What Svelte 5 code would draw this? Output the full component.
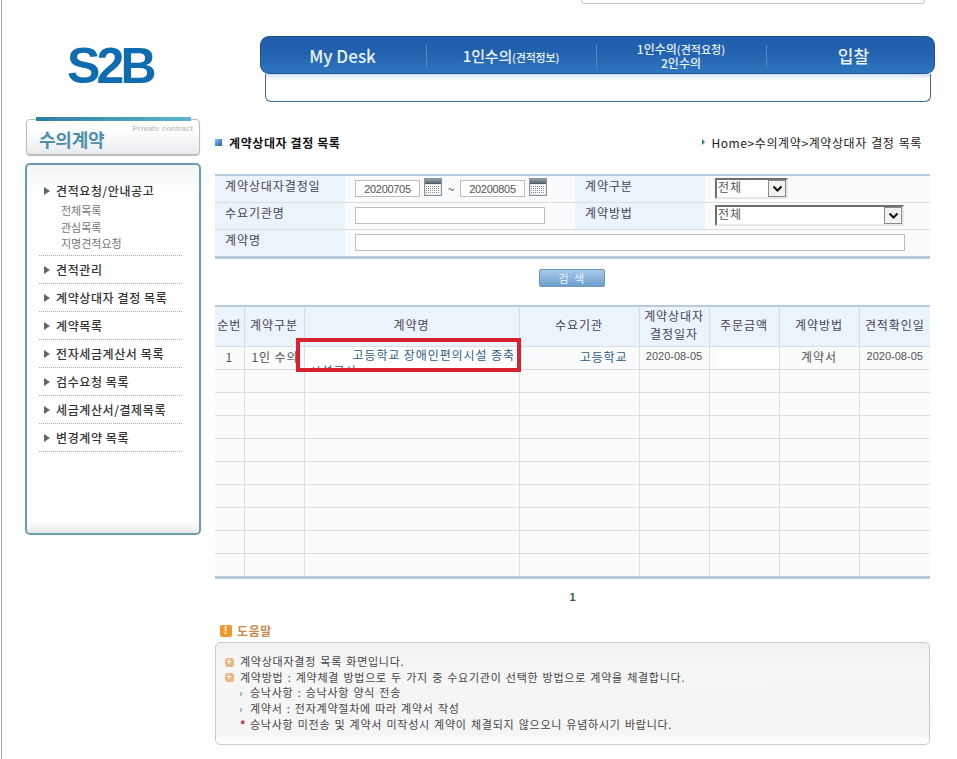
<script>
  const navItems = [
    { main: "My Desk", cls: "desk" },
    { main: "1인수의", small: "(견적정보)", cls: "solo" },
    { lines: true },
    { main: "입찰", cls: "bid" },
  ];

  const menu = [
    { label: "견적요청/안내공고", subs: ["전체목록", "관심목록", "지명견적요청"] },
    { label: "견적관리" },
    { label: "계약상대자 결정 목록" },
    { label: "계약목록" },
    { label: "전자세금계산서 목록" },
    { label: "검수요청 목록" },
    { label: "세금계산서/결제목록" },
    { label: "변경계약 목록" },
  ];

  const columns = ["순번", "계약구분", "계약명", "수요기관", "계약상대자<br>결정일자", "주문금액", "계약방법", "견적확인일"];
  const emptyRows = Array(9).fill(0);
</script>

{#snippet calendar()}
  <svg class="cal" width="18" height="18" viewBox="0 0 18 18" aria-hidden="true">
    <defs>
      <linearGradient id="calTop" x1="0" y1="0" x2="0" y2="1">
        <stop offset="0" stop-color="#9aa3ad" />
        <stop offset="1" stop-color="#4f5a66" />
      </linearGradient>
      <pattern id="calDots" width="2" height="2" patternUnits="userSpaceOnUse">
        <rect width="2" height="2" fill="#fff" />
        <rect width="1" height="1" fill="#7d8791" />
      </pattern>
    </defs>
    <rect x="0.5" y="0.5" width="17" height="17" fill="#e6e8ea" stroke="#8a929a" />
    <rect x="1" y="1" width="16" height="5" fill="url(#calTop)" />
    <rect x="2" y="7" width="14" height="9" fill="url(#calDots)" />
  </svg>
{/snippet}

{#snippet selectBox(wide)}
  <div class="select" class:wide>
    <span class="select-value">전체</span>
    <span class="select-btn">
      <svg width="11" height="8" viewBox="0 0 11 8" aria-hidden="true">
        <path d="M1.5 1.5 L5.5 5.5 L9.5 1.5" fill="none" stroke="#111" stroke-width="2" />
      </svg>
    </span>
  </div>
{/snippet}

<div class="page">
  <div class="top-stub"></div>

  <header class="header">
    <div class="logo">S2B</div>
    <div class="nav-wrap">
      <nav class="nav">
        {#each navItems as item, i}
          <div class="nav-item {item.cls ?? ''}" class:first={i === 0}>
            {#if item.lines}
              <span class="nav-two">1인수의<small>(견적요청)</small><br />2인수의</span>
            {:else}
              <span>{item.main}{#if item.small}<small>{item.small}</small>{/if}</span>
            {/if}
          </div>
        {/each}
      </nav>
      <div class="subnav"></div>
    </div>
  </header>

  <div class="content">
    <aside class="side">
      <div class="side-title">
        <span class="side-bar"></span>
        <strong>수의계약</strong>
        <em>Private contract</em>
      </div>
      <ul class="menu">
        {#each menu as item}
          <li>
            <div class="menu-label">{item.label}</div>
            {#if item.subs}
              <ul class="submenu">
                {#each item.subs as sub}
                  <li>{sub}</li>
                {/each}
              </ul>
            {/if}
          </li>
        {/each}
      </ul>
    </aside>

    <main class="main">
      <div class="head">
        <h2><span class="square"></span>계약상대자 결정 목록</h2>
        <div class="crumb"><span class="crumb-dot"></span>Home&gt;수의계약&gt;계약상대자 결정 목록</div>
      </div>

      <table class="search">
        <colgroup>
          <col style="width:130px" /><col style="width:230px" /><col style="width:130px" /><col />
        </colgroup>
        <tbody>
          <tr>
            <th>계약상대자결정일</th>
            <td>
              <div class="dates">
                <input class="input date" value="20200705" />
                {@render calendar()}
                <span class="tilde">~</span>
                <input class="input date" value="20200805" />
                {@render calendar()}
              </div>
            </td>
            <th>계약구분</th>
            <td>{@render selectBox(false)}</td>
          </tr>
          <tr>
            <th>수요기관명</th>
            <td><input class="input org" /></td>
            <th>계약방법</th>
            <td>{@render selectBox(true)}</td>
          </tr>
          <tr>
            <th>계약명</th>
            <td colspan="3"><input class="input name" /></td>
          </tr>
        </tbody>
      </table>

      <div class="search-action"><button class="search-btn">검 색</button></div>

      <div class="grid-wrap">
        <table class="grid">
          <colgroup>
            <col style="width:29px" /><col style="width:60px" /><col style="width:215px" /><col style="width:120px" />
            <col style="width:70px" /><col style="width:70px" /><col style="width:80px" /><col />
          </colgroup>
          <thead>
            <tr>
              {#each columns as col}
                <th>{@html col}</th>
              {/each}
            </tr>
          </thead>
          <tbody>
            <tr class="data">
              <td>1</td>
              <td class="kind">1인 수의</td>
              <td class="contract">
                <div class="clip">고등학교 장애인편의시설 종축 시설공사</div>
              </td>
              <td class="org-cell"><span class="blue">고등학교</span></td>
              <td class="num">2020-08-05</td>
              <td class="amount"><span class="mask"></span></td>
              <td>계약서</td>
              <td class="num">2020-08-05</td>
            </tr>
            {#each emptyRows as _}
              <tr>
                <td></td><td></td><td></td><td></td><td></td><td></td><td></td><td></td>
              </tr>
            {/each}
          </tbody>
        </table>
        <div class="highlight"></div>
      </div>

      <div class="pager">1</div>

      <h3 class="help-title"><span class="help-icon">!</span>도움말</h3>
      <div class="help">
        <p><span class="plus">+</span>계약상대자결정 목록 화면입니다.</p>
        <p><span class="plus">+</span>계약방법 : 계약체결 방법으로 두 가지 중 수요기관이 선택한 방법으로 계약을 체결합니다.</p>
        <p class="sub"><span class="tri"></span>승낙사항 : 승낙사항 양식 전송</p>
        <p class="sub"><span class="tri"></span>계약서 : 전자계약절차에 따라 계약서 작성</p>
        <p class="sub"><span class="star">*</span>승낙사항 미전송 및 계약서 미작성시 계약이 체결되지 않으오니 유념하시기 바랍니다.</p>
      </div>
    </main>
  </div>
</div>

<style>
  :global(body) {
    margin: 0;
    background: #fff;
  }

  .page {
    position: relative;
    width: 955px;
    height: 759px;
    margin-left: 1px;
    border-left: 1px solid #aaa;
    overflow: hidden;
    font-family: "Noto Sans CJK KR", "Liberation Sans", sans-serif;
    font-size: 12px;
    color: #444;
  }

  .top-stub {
    width: 342px;
    height: 3px;
    margin-left: 579px;
    border: 1px solid #c4c6cc;
    border-top: none;
    border-radius: 0 0 5px 5px;
  }

  .header {
    display: flex;
    margin-top: 32px;
  }

  .logo {
    width: 258px;
    box-sizing: border-box;
    padding: 0 0 0 65px;
    height: 66px;
    font-family: "Liberation Sans", sans-serif;
    font-size: 50px;
    font-weight: 700;
    line-height: 60px;
    letter-spacing: -3.8px;
    color: #0f6cb0;
  }

  .nav-wrap {
    width: 675px;
  }

  .nav {
    display: grid;
    grid-template-columns: 165px 170px 170px 1fr;
    height: 36px;
    border: 1px solid #1c5288;
    border-radius: 9px;
    background: linear-gradient(#1f5fae, #2161ae 40%, #2f76bf);
  }

  .nav-item {
    position: relative;
    display: flex;
    align-items: center;
    justify-content: center;
    font-size: 16px;
    font-weight: 500;
    color: #eaf2fb;
  }

  .nav-item:not(.first)::before {
    content: "";
    position: absolute;
    left: 0;
    top: 8px;
    bottom: 5px;
    width: 1px;
    background: #4f8ac6;
  }

  .nav-item.desk {
    font-size: 17px;
    padding-right: 2px;
  }

  .nav-item.solo {
    font-size: 15px;
    letter-spacing: -0.2px;
  }

  .nav-item.bid {
    font-size: 17px;
    padding-left: 7px;
  }

  .nav-item small {
    font-size: 11px;
    font-weight: 500;
  }

  .nav-two {
    font-size: 12px;
    line-height: 13px;
    text-align: center;
  }

  .nav-two small {
    font-size: 11px;
  }

  .subnav {
    box-sizing: border-box;
    width: 666px;
    height: 28px;
    margin-left: 5px;
    border: 1px solid #3a6d90;
    border-top: none;
    border-radius: 0 0 6px 6px;
    background: linear-gradient(#cfe0f6, #fff 6px);
  }

  .content {
    display: flex;
    margin-top: 15px;
  }

  .side {
    width: 176px;
    margin-left: 23px;
    margin-right: 14px;
  }

  .side-title {
    position: relative;
    box-sizing: border-box;
    height: 36px;
    margin: 2px 0 8px 1px;
    width: 174px;
    padding-left: 12px;
    border: 1px solid #b9bcc2;
    border-radius: 4px;
    background: linear-gradient(#fff 30%, #e8ebee);
    box-shadow: 0 1px 1px #bbb;
  }

  .side-bar {
    position: absolute;
    left: 9px;
    right: 8px;
    top: -3px;
    height: 4px;
    background: linear-gradient(90deg, #2b7f9f, #5bb8d0);
  }

  .side-title strong {
    display: block;
    padding-top: 6px;
    font-size: 18px;
    line-height: 26px;
    letter-spacing: -0.2px;
    color: #4d8fae;
  }

  .side-title em {
    position: absolute;
    right: 6px;
    top: 4px;
    font-family: "Liberation Sans", sans-serif;
    font-size: 8px;
    font-style: normal;
    font-weight: 700;
    color: #c8c8c8;
  }

  .menu {
    box-sizing: border-box;
    height: 372px;
    margin: 0;
    padding: 12px 17px 0 12px;
    list-style: none;
    border: 2px solid #6f9aae;
    border-radius: 5px;
    background: linear-gradient(#f2f5f7, #fff 30px, #fff 356px, #e8e8e8);
  }

  .menu > li {
    border-bottom: 1px dotted #aaa;
  }

  .menu-label {
    position: relative;
    height: 27px;
    padding-left: 17px;
    line-height: 27px;
    font-weight: 500;
    letter-spacing: 0.6px;
    color: #333;
  }

  .menu-label::before {
    content: "";
    position: absolute;
    left: 5px;
    top: 10px;
    border-left: 6px solid #5a6a6a;
    border-top: 4px solid transparent;
    border-bottom: 4px solid transparent;
  }

  .submenu {
    margin: -2px 0 3px;
    padding: 0 0 0 22px;
    list-style: none;
    font-size: 11px;
    line-height: 16.5px;
    color: #777;
  }

  .main {
    width: 715px;
  }

  .head {
    display: flex;
    align-items: center;
    justify-content: space-between;
    height: 50px;
    margin-bottom: 7px;
  }

  h2 {
    display: flex;
    align-items: center;
    margin: 0;
    font-size: 12px;
    font-weight: 700;
    letter-spacing: 0.6px;
    color: #111;
  }

  .square {
    width: 7px;
    height: 7px;
    margin-right: 7px;
    background: linear-gradient(135deg, #8cc0ee, #1e5fae);
  }

  .crumb {
    display: flex;
    align-items: center;
    padding-right: 8px;
    letter-spacing: 0.6px;
    word-spacing: 1px;
    color: #222;
  }

  .crumb-dot {
    width: 0;
    height: 0;
    margin-right: 6px;
    border-left: 3px solid #2a7f8f;
    border-top: 3px solid transparent;
    border-bottom: 3px solid transparent;
  }

  table {
    width: 715px;
    border-collapse: collapse;
    table-layout: fixed;
  }

  .search {
    border-top: 2px solid #b7cbdb;
    border-bottom: 3px solid #b7cbdb;
  }

  .search tr {
    height: 27px;
    border-bottom: 1px solid #ddd;
  }

  .search tr:last-child {
    height: 28px;
    border-bottom: none;
  }

  .search th {
    padding: 0 0 6px 10px;
    text-align: left;
    font-weight: 400;
    letter-spacing: 0.9px;
    color: #445;
    background: #ebf3fb;
  }

  .search td {
    padding: 0 0 0 10px;
    background: #fafbfd;
  }

  .input {
    display: block;
    box-sizing: border-box;
    height: 17px;
    padding: 0 3px;
    border: 1px solid #bdbdbd;
    border-radius: 0;
    background: #fff;
    font-family: "Liberation Sans", sans-serif;
    font-size: 11px;
    letter-spacing: -0.3px;
    color: #555;
    outline: none;
  }

  .date {
    width: 65px;
    text-align: center;
  }

  .org {
    width: 190px;
  }

  .name {
    width: 550px;
  }

  .dates {
    display: flex;
    align-items: center;
  }

  .cal {
    margin: -3px 0 0 4px;
  }

  .tilde {
    width: 18px;
    text-align: center;
  }

  .select {
    display: flex;
    justify-content: space-between;
    box-sizing: border-box;
    width: 73px;
    height: 21px;
    border: 2px solid;
    border-color: #6f6f6f #e6e6e6 #e6e6e6 #6f6f6f;
    background: #fff;
  }

  .select.wide {
    width: 189px;
  }

  .select-value {
    padding-left: 1px;
    line-height: 13px;
    letter-spacing: 0.9px;
    color: #555;
  }

  .select-btn {
    display: flex;
    align-items: center;
    justify-content: center;
    width: 18px;
    box-sizing: border-box;
    border: 1px solid #8a8a8a;
    background: #f1f1ee;
  }

  .search-action {
    display: flex;
    justify-content: center;
    height: 46px;
    padding-top: 10px;
    box-sizing: border-box;
  }

  .search-btn {
    width: 66px;
    height: 18px;
    margin-left: -1px;
    padding: 0;
    border: 1px solid #6f97b6;
    border-radius: 2px;
    background: linear-gradient(#a9cbe8, #6b9fce);
    font-family: inherit;
    font-size: 11px;
    letter-spacing: 1.5px;
    line-height: 14px;
    color: #e9f2fa;
  }

  .grid-wrap {
    position: relative;
  }

  .grid {
    border-top: 2px solid #b7cbdb;
    border-bottom: 3px solid #b7cbdb;
  }

  .grid th {
    height: 36px;
    padding: 0 0 3px;
    border-right: 1px solid #d5dde6;
    border-bottom: 1px solid #d5dde6;
    background: #ebf3fb;
    font-weight: 400;
    line-height: 18px;
    letter-spacing: 0.9px;
    color: #445;
  }

  .grid th:last-child,
  .grid td:last-child {
    border-right: none;
  }

  .grid td {
    height: 22px;
    padding: 0;
    border-right: 1px solid #ddd;
    border-bottom: 1px solid #ddd;
    background: #fafbfd;
    text-align: center;
    letter-spacing: 0.9px;
    color: #555;
  }

  .grid tr:last-child td {
    border-bottom: none;
  }

  .grid .data td {
    height: 19px;
    padding-bottom: 3px;
  }

  .grid .data td.contract {
    height: 22px;
    padding-bottom: 0;
  }

  .grid td.kind {
    text-align: left;
    padding-left: 7px;
    white-space: nowrap;
  }

  .grid td.num {
    font-family: "Liberation Sans", sans-serif;
    font-size: 11px;
    letter-spacing: 0;
  }

  .grid td.org-cell {
    text-align: right;
    padding-right: 11px;
  }

  .blue {
    color: #2b5f86;
  }

  /* first line sits after the blanked-out part of the name, the rest wraps under it */
  .clip {
    box-sizing: border-box;
    width: 220px;
    height: 22px;
    overflow: hidden;
    padding: 0 2px 0 5px;
    text-indent: 43px;
    text-align: left;
    line-height: 16px;
    color: #2b5f86;
    background: #fff;
  }

  .amount {
    position: relative;
  }

  .mask {
    position: absolute;
    left: 7px;
    right: 0;
    top: 1px;
    bottom: 1px;
    background: #fff;
  }

  .highlight {
    position: absolute;
    left: 81px;
    top: 33px;
    box-sizing: border-box;
    width: 225px;
    height: 34px;
    border: 4px solid #d8202f;
  }

  .pager {
    margin-top: 12px;
    height: 18px;
    text-align: center;
    font-family: "Liberation Sans", sans-serif;
    font-size: 11px;
    font-weight: 700;
    color: #2e6b2e;
  }

  .help-title {
    display: flex;
    align-items: center;
    height: 16px;
    margin: 14px 0 3px 5px;
    font-size: 12px;
    font-weight: 700;
    letter-spacing: 0.6px;
    color: #c98a4c;
  }

  .help-icon {
    width: 12px;
    height: 12px;
    margin-right: 5px;
    border-radius: 2px;
    background: #ee9a2e;
    color: #fff;
    font-family: "Liberation Sans", sans-serif;
    font-size: 10px;
    line-height: 12px;
    text-align: center;
  }

  .help {
    box-sizing: border-box;
    height: 103px;
    padding: 11px 0 0 9px;
    border: 1px solid #ccc;
    border-radius: 5px;
    background: linear-gradient(#f0f0f0, #f6f6f6 20px, #f5f5f5 90px, #fff);
  }

  .help p {
    display: flex;
    align-items: center;
    height: 15.6px;
    margin: 0;
    font-size: 11px;
    letter-spacing: 0.75px;
    word-spacing: 1px;
    color: #444;
  }

  .help p.sub {
    padding-left: 15px;
  }

  .plus {
    width: 9px;
    height: 9px;
    margin: 2px 6px 0 0;
    border-radius: 3px;
    background: #e8b67e;
    color: #fff;
    font-family: "Liberation Sans", sans-serif;
    font-size: 9px;
    font-weight: 700;
    line-height: 9px;
    text-align: center;
  }

  .tri {
    width: 0;
    height: 0;
    margin: 3px 7px 0 0;
    border-left: 3px solid #a9bfc6;
    border-top: 3px solid transparent;
    border-bottom: 3px solid transparent;
  }

  .star {
    width: 10px;
    color: #c8202f;
    font-weight: 700;
  }
</style>
